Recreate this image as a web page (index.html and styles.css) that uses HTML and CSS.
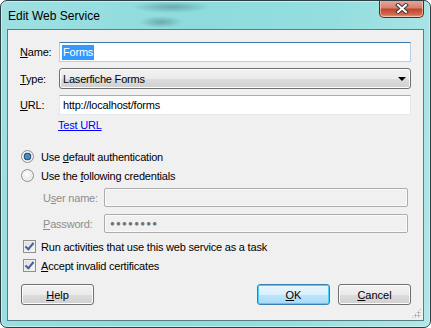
FILE: index.html
```html
<!DOCTYPE html>
<html lang="en">
<head>
    <meta charset="UTF-8">
    <title>Edit Web Service</title>
    <link rel="stylesheet" href="styles.css">
</head>
<body>
    <div class="window">
        <div class="titlebar">
            <span class="title">Edit Web Service</span>
            <div class="close">
                <svg width="14" height="11" viewBox="0 0 14 11">
                    <path d="M3 2 L11 9 M11 2 L3 9" stroke="#3a3a3a" stroke-width="4" stroke-linecap="square"/>
                    <path d="M3 2 L11 9 M11 2 L3 9" stroke="#fff" stroke-width="2" stroke-linecap="square"/>
                </svg>
            </div>
        </div>

        <div class="client">
            <div class="fields">
                <label class="lbl"><u>N</u>ame:</label>
                <div class="textbox focused"><span class="selected">Forms</span></div>

                <label class="lbl"><u>T</u>ype:</label>
                <div class="combo">
                    <span>Laserfiche Forms</span>
                    <span class="arrow"></span>
                </div>

                <label class="lbl"><u>U</u>RL:</label>
                <div class="textbox">http://localhost/forms</div>

                <span></span>
                <a class="link" href="#">Test URL</a>
            </div>

            <div class="auth">
                <div class="option">
                    <span class="radio checked"></span>
                    <span>Use <u>d</u>efault authentication</span>
                </div>
                <div class="option">
                    <span class="radio"></span>
                    <span>Use the <u>f</u>ollowing credentials</span>
                </div>

                <div class="creds">
                    <label class="lbl disabled">U<u>s</u>er name:</label>
                    <div class="textbox off"></div>

                    <label class="lbl disabled"><u>P</u>assword:</label>
                    <div class="textbox off dots">&#9679;&#9679;&#9679;&#9679;&#9679;&#9679;&#9679;&#9679;</div>
                </div>

                <div class="option check-row">
                    <span class="check"></span>
                    <span>Run activities that use this web service as a task</span>
                </div>
                <div class="option check-row">
                    <span class="check"></span>
                    <span><u>A</u>ccept invalid certificates</span>
                </div>
            </div>

            <div class="buttons">
                <button type="button" class="btn"><u>H</u>elp</button>
                <div class="right">
                    <button type="button" class="btn default"><u>O</u>K</button>
                    <button type="button" class="btn"><u>C</u>ancel</button>
                </div>
            </div>
            <div class="grip"></div>
        </div>
    </div>
</body>
</html>
```

FILE: styles.css
```css
body {
    margin: 0;
    font-family: "Liberation Sans", Arial, sans-serif;
    font-size: 11px;
    letter-spacing: -0.2px;
    color: #000;
    background: #fff;
}

.window {
    width: 431px;
    height: 328px;
    box-sizing: border-box;
    border: 1px solid #2c3f43;
    border-radius: 7px;
    display: flex;
    flex-direction: column;
    background:
        radial-gradient(ellipse 40px 6px at 170px 6px, rgba(60, 110, 115, 0.45), transparent),
        radial-gradient(ellipse 22px 6px at 160px 21px, rgba(60, 110, 115, 0.45), transparent),
        linear-gradient(100deg, #9fe0e2 0%, #8ddbdd 40%, #95dedf 70%, #b2e7e7 100%);
    box-shadow: inset 0 0 0 1px #c6efef;
    overflow: hidden;
}

.titlebar {
    height: 28px;
    display: flex;
    justify-content: space-between;
    align-items: flex-start;
    padding: 0 6px 0 7px;
}

.title {
    font-size: 12px;
    letter-spacing: 0;
    margin-top: 8px;
    color: #000;
}

.close {
    width: 45px;
    height: 18px;
    margin-top: -1px;
    box-sizing: border-box;
    border: 1px solid #5b2a24;
    border-top: none;
    border-radius: 0 0 5px 5px;
    background: linear-gradient(#e9a99c 0%, #d7826f 45%, #c1452e 55%, #d06a4e 85%, #e5a28d 100%);
    box-shadow: inset 0 0 0 1px rgba(255, 220, 210, 0.6);
    display: flex;
    align-items: center;
    justify-content: center;
}

.client {
    flex: 1;
    margin: 0 6px 6px 6px;
    border: 1px solid #587d82;
    background: #f0f0f0;
    padding: 12px 12px 0 12px;
    position: relative;
}

.fields {
    display: grid;
    grid-template-columns: 39px 1fr;
    row-gap: 6px;
    align-items: center;
}

.lbl {
    line-height: 14px;
}

.textbox {
    height: 20px;
    box-sizing: border-box;
    border: 1px solid #e3e9ef;
    border-top-color: #abadb3;
    background: #fff;
    padding: 0 3px;
    line-height: 18px;
    white-space: nowrap;
}

.textbox.focused {
    border-color: #b5cfe7;
    border-top-color: #3d7bad;
    padding-left: 2px;
}

.selected {
    background: #3399ff;
    color: #fff;
    padding: 0 1px;
    display: inline-block;
    line-height: 15px;
}

.combo {
    height: 21px;
    box-sizing: border-box;
    border: 1px solid #707070;
    border-radius: 3px;
    background: linear-gradient(#f2f2f2 0%, #ebebeb 50%, #dddddd 51%, #cfcfcf 100%);
    box-shadow: inset 0 0 0 1px #fcfcfc;
    display: flex;
    justify-content: space-between;
    align-items: center;
    padding: 0 4px 0 3px;
}

.arrow {
    width: 0;
    height: 0;
    border-left: 4px solid transparent;
    border-right: 4px solid transparent;
    border-top: 4px solid #000;
    margin-top: 1px;
}

.link {
    color: #0000ff;
    text-decoration: underline;
    margin-top: -2px;
    margin-left: -1px;
    width: max-content;
}

.auth {
    margin-top: 16px;
}

.option {
    display: flex;
    align-items: center;
    gap: 7px;
    height: 19px;
    line-height: 14px;
    padding-left: 1px;
}

.radio {
    width: 11px;
    height: 11px;
    border: 1px solid #8e8f8f;
    border-radius: 50%;
    background: radial-gradient(circle at 40% 40%, #ffffff, #d9d9d9);
    box-shadow: inset 0 0 0 1px #f4f4f4;
    flex: none;
}

.radio.checked {
    background: radial-gradient(circle at 50% 50%, #4a8bbf 0 2.5px, #123a5a 3.5px, #d0d6dc 4px, #f4f4f4 100%);
}

.creds {
    display: grid;
    grid-template-columns: 61px 1fr;
    row-gap: 7px;
    align-items: center;
    margin: 3px 3px 0 23px;
}

.lbl.disabled {
    color: #8d8d8d;
}

.textbox.off {
    background: #f0f0f0;
    border: 1px solid #adadad;
    border-radius: 2px;
    box-shadow: inset 0 0 0 1px #fafafa;
    height: 19px;
}

.dots {
    color: #707070;
    font-size: 8px;
    letter-spacing: 1.2px;
    line-height: 17px;
    padding-left: 5px;
}

.check-row {
    gap: 5px;
    padding-left: 3px;
}

.creds + .check-row {
    margin-top: 4px;
}

.check {
    width: 11px;
    height: 11px;
    border: 1px solid #8f8f8f;
    background: linear-gradient(135deg, #dcdcdc, #f8f8f8);
    box-shadow: inset 0 0 0 1px #f0f0f0;
    position: relative;
    flex: none;
}

.check::after {
    content: "";
    position: absolute;
    left: 3px;
    top: 0px;
    width: 3px;
    height: 7px;
    border-right: 2px solid #4a5f97;
    border-bottom: 2px solid #4a5f97;
    transform: rotate(40deg);
}

.buttons {
    display: flex;
    justify-content: space-between;
    margin-top: 9px;
    padding-left: 1px;
}

.right {
    display: flex;
    gap: 8px;
}

.btn {
    width: 73px;
    height: 21px;
    border: 1px solid #707070;
    border-radius: 3px;
    background: linear-gradient(#f2f2f2 0%, #ebebeb 50%, #dddddd 51%, #cfcfcf 100%);
    box-shadow: inset 0 0 0 1px #fcfcfc;
    font-family: "Liberation Sans", Arial, sans-serif;
    font-size: 11px;
    color: #000;
    padding: 0;
}

.btn.default {
    border-color: #3c7fb1;
    box-shadow: inset 0 0 0 1px #48d0fa;
    background: linear-gradient(#eaf6fd 0%, #d9f0fc 50%, #bee6fd 51%, #a7d9f5 100%);
}

.grip {
    position: absolute;
    right: 2px;
    bottom: 2px;
    width: 10px;
    height: 10px;
    background:
        radial-gradient(circle, #a0a0a0 0.8px, transparent 1.2px) 0 0 / 3px 3px;
    clip-path: polygon(100% 0, 100% 100%, 0 100%);
}
```
